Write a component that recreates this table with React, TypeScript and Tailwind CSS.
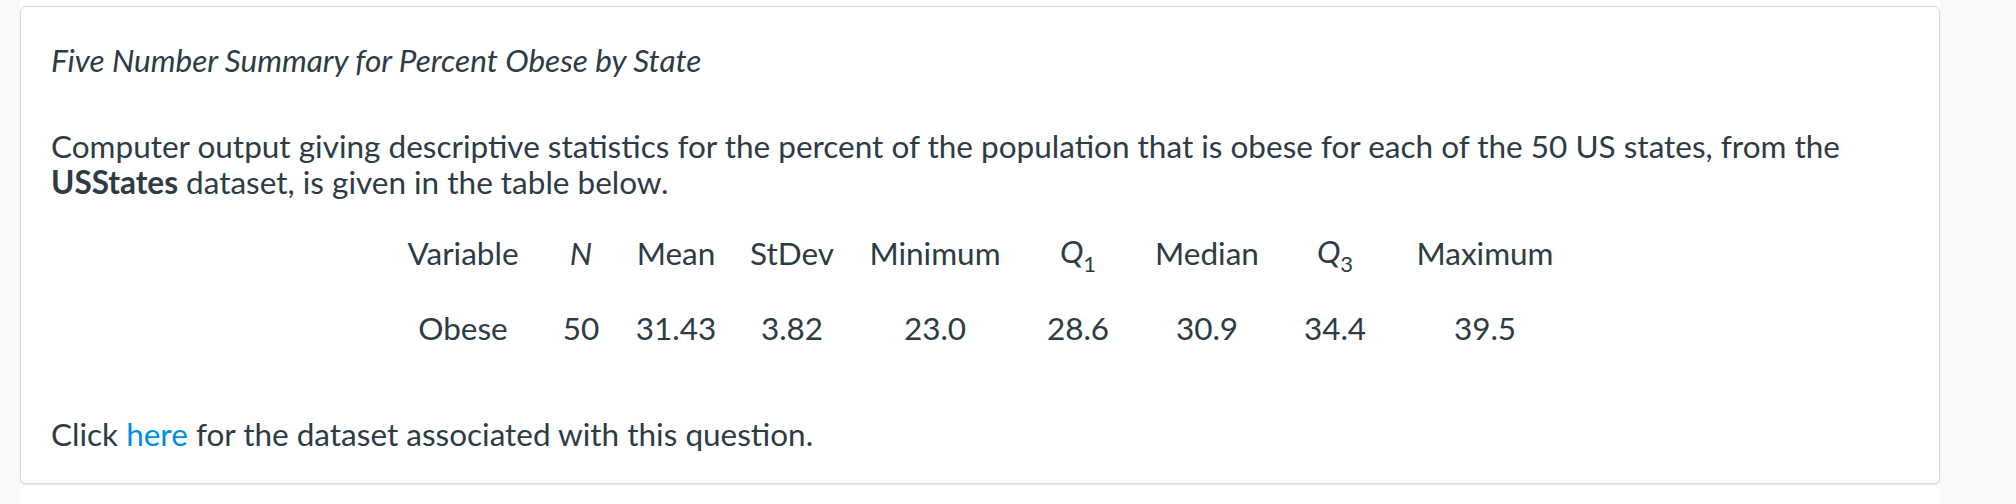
import React from 'react';

const headers = ['Variable', 'N', 'Mean', 'StDev', 'Minimum', 'Q1', 'Median', 'Q3', 'Maximum'];
const values = ['Obese', '50', '31.43', '3.82', '23.0', '28.6', '30.9', '34.4', '39.5'];
const widths = ['w-[168px]', 'w-[68px]', 'w-[122px]', 'w-[110px]', 'w-[176px]', 'w-[110px]', 'w-[148px]', 'w-[108px]', 'w-[192px]'];

function Header({ label }: { label: string }) {
  if (label === 'N') return <span className="italic">N</span>;
  if (label === 'Q1' || label === 'Q3') {
    return (
      <span>
        <span className="italic">Q</span>
        <span className="relative top-[9px] text-[22px]">{label[1]}</span>
      </span>
    );
  }
  return <span>{label}</span>;
}

export default function App() {
  return (
    <div className="flex min-h-[504px] bg-[#f9f9f9] font-['Lato','Noto_Sans',sans-serif] text-[#2d3b45]">
      <div className="w-[20px] shrink-0" />
      <div className="w-[1920px] shrink-0 bg-white pt-[6px]">
        <div className="h-[478px] rounded-[6px] border border-[#d9d9d9] shadow-[0_1px_2px_rgba(0,0,0,0.12)] px-[30px] pt-[35px] text-[31.5px] leading-[36px]">
          <p className="italic">Five Number Summary for Percent Obese by State</p>
          <p className="mt-[50px]">
            Computer output giving descriptive statistics for the percent of the population that is obese for each of the 50 US states, from the{' '}
            <strong className="font-bold">USStates</strong> dataset, is given in the table below.
          </p>
          <table className="mx-auto mt-[17px] border-collapse">
            <tbody>
              <tr>
                {headers.map((h, i) => (
                  <td key={h} className={`${widths[i]} h-[71px] p-0 text-center align-middle`}>
                    <Header label={h} />
                  </td>
                ))}
              </tr>
              <tr>
                {values.map((v, i) => (
                  <td key={i} className={`${widths[i]} h-[80px] p-0 text-center align-middle`}>
                    {v}
                  </td>
                ))}
              </tr>
            </tbody>
          </table>
          <p className="mt-[48px]">
            Click <a className="text-[#008ee2]">here</a> for the dataset associated with this question.
          </p>
        </div>
      </div>
    </div>
  );
}
